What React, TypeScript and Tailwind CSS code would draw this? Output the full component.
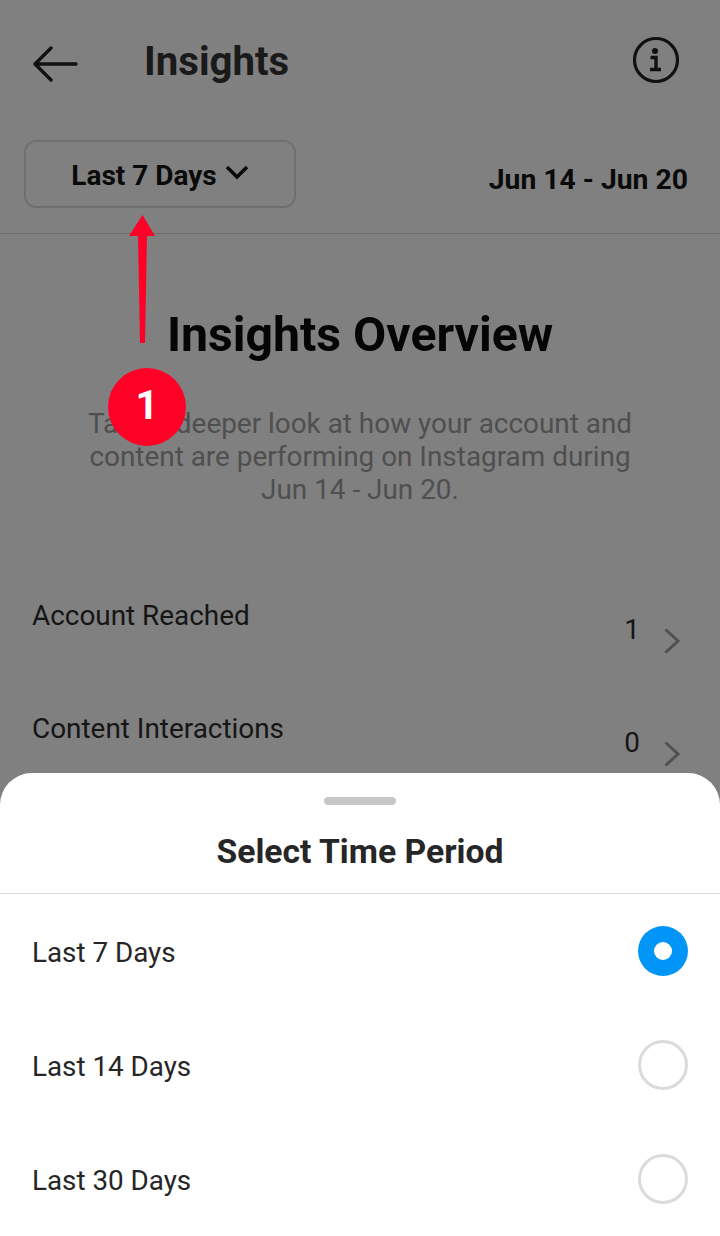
export default function App() {
  const rows = [
    { label: "Last 7 Days", on: true },
    { label: "Last 14 Days", on: false },
    { label: "Last 30 Days", on: false },
  ];
  return (
    <div className="relative h-[1236px] w-[720px] overflow-hidden bg-[#808080] font-['Roboto',sans-serif] text-[#111]">
      <header className="flex h-[124px] items-center pl-[32px] pr-[41px]">
        <svg width="46" height="36" viewBox="0 0 46 36" fill="none" stroke="#111" strokeWidth="3.4" strokeLinecap="round" strokeLinejoin="round" className="mt-[4px]">
          <path d="M44 18H3M19 2L3 18l16 16" />
        </svg>
        <h1 className="ml-[66px] text-[40.2px] font-bold leading-none text-[#1a1a1a]">Insights</h1>
        <svg width="46" height="46" viewBox="0 0 46 46" fill="none" className="mb-[4px] ml-auto">
          <circle cx="23" cy="23" r="21.5" stroke="#111" strokeWidth="3.2" />
          <circle cx="22" cy="14" r="3" fill="#111" />
          <path d="M17.5 20.5h5.5V31.5M17 32.5h11" stroke="#111" strokeWidth="3.4" />
        </svg>
      </header>
      <div className="flex h-[110px] items-start justify-between border-b border-[#6e6e6e] pl-[24px] pr-[32px] pt-[16px]">
        <div className="flex h-[68px] w-[272px] items-center justify-center gap-[8px] rounded-[12px] border-2 border-[#707070]">
          <span className="mt-[4px] text-[28px] font-bold text-[#0a0a0a]">Last 7 Days</span>
          <svg width="24" height="16" viewBox="0 0 24 16" fill="none" stroke="#0a0a0a" strokeWidth="3.6" className="mb-[4px]">
            <path d="M2 3l10 10L22 3" />
          </svg>
        </div>
        <div className="mt-[19px] text-[28.3px] font-bold leading-[42px] text-[#0a0a0a]">Jun 14 - Jun 20</div>
      </div>
      <div className="flex flex-col items-center pt-[71px]">
        <h2 className="text-[48.2px] font-bold leading-[60px] text-[#050505]">Insights Overview</h2>
        <p className="mt-[42px] w-[560px] pb-[1px] text-center text-[27.9px] leading-[33px] text-[#4f4f4f]">
          Take a deeper look at how your account and content are performing on Instagram during Jun 14 - Jun 20.
        </p>
      </div>
      <div className="flex flex-col gap-[73px] pl-[32px] pr-[40px] pt-[89px]">
        {[["Account Reached", "1"], ["Content Interactions", "0"]].map(([l, v]) => (
          <div key={l} className="flex h-[40px] items-start">
            <span className="text-[27.9px] leading-[40px] text-[#151515]">{l}</span>
            <span className="ml-auto mt-[14px] text-[27.9px] leading-[40px] text-[#151515]">{v}</span>
            <svg width="16" height="26" viewBox="0 0 16 26" fill="none" stroke="#505050" strokeWidth="3" className="ml-[24px] mt-[32px]">
              <path d="M1.5 1.5l12.5 11.5L1.5 24.5" />
            </svg>
          </div>
        ))}
      </div>

      {/* annotation */}
      <svg width="26" height="129" viewBox="0 0 26 129" className="absolute left-[129px] top-[215px]">
        <path d="M13.5 0L26 21H18L16 128H11L9 21H0Z" fill="#ff0026" />
      </svg>
      <div className="absolute left-[108px] top-[368px] flex h-[78px] w-[78px] items-center justify-center rounded-full bg-[#ff0026] pb-[2px] text-[40px] font-bold text-white">1</div>

      {/* bottom sheet */}
      <div className="absolute bottom-0 left-0 right-0 h-[463px] rounded-t-[32px] bg-white text-[#262626]">
        <div className="mx-auto mt-[24px] h-[8px] w-[72px] rounded-full bg-[#c7c7c7]" />
        <div className="flex h-[89px] items-center justify-center border-b border-[#dbdbdb] pt-[7px] text-[33.7px] font-bold">Select Time Period</div>
        <div className="flex flex-col pl-[32px] pr-[32px]">
          {rows.map((r) => (
            <div key={r.label} className="flex h-[114px] items-center justify-between">
              <span className="pt-[3px] text-[27.8px]">{r.label}</span>
              {r.on ? (
                <div className="flex h-[50px] w-[50px] items-center justify-center rounded-full bg-[#0095f6]">
                  <div className="h-[18px] w-[18px] rounded-full bg-white" />
                </div>
              ) : (
                <div className="h-[50px] w-[50px] rounded-full border-[3px] border-[#dbdbdb]" />
              )}
            </div>
          ))}
        </div>
      </div>
    </div>
  );
}
